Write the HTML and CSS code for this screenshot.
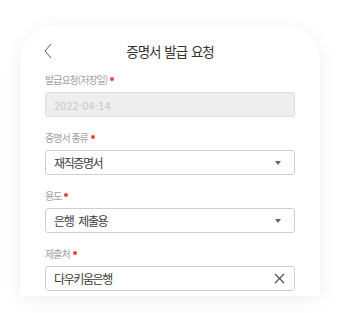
FILE: index.html
```html
<!DOCTYPE html>
<html lang="ko">
<head>
<meta charset="utf-8">
<link rel="stylesheet" href="styles.css">
</head>
<body>
<div class="page">
  <div class="card">
    <div class="header">
      <svg class="back" width="10" height="16" viewBox="0 0 10 16"><path d="M8 1 L2 8 L8 15" fill="none" stroke="#555" stroke-width="1"/></svg>
      <div class="title">증명서 발급 요청</div>
    </div>
    <div class="field">
      <div class="label">발급요청(저장일) <span class="req"></span></div>
      <div class="input disabled">2022-04-14</div>
    </div>
    <div class="field">
      <div class="label">증명서 종류 <span class="req"></span></div>
      <div class="input"><span>재직증명서</span><span class="caret"></span></div>
    </div>
    <div class="field">
      <div class="label">용도 <span class="req"></span></div>
      <div class="input"><span>은행 제출용</span><span class="caret"></span></div>
    </div>
    <div class="field last">
      <div class="label">제출처 <span class="req"></span></div>
      <div class="input"><span>다우키움은행</span>
        <svg class="clear" width="11" height="11" viewBox="0 0 11 11"><path d="M1 1 L10 10 M10 1 L1 10" stroke="#555" stroke-width="1.3" fill="none"/></svg>
      </div>
    </div>
  </div>
</div>
</body>
</html>
```
FILE: styles.css
```css
* { box-sizing: border-box; }
html, body { margin: 0; padding: 0; background: #fff; }
body {
  font-family: "Noto Sans CJK KR", "Noto Sans", sans-serif;
  width: 340px;
  height: 313px;
  overflow: hidden;
}
.page {
  padding: 25px 20px 0;
}
.card {
  background: #fff;
  border-radius: 36px 36px 0 0;
  box-shadow: 0 3px 18px rgba(0,0,0,0.07);
  padding: 0 25px 5px;
}
.header {
  position: relative;
  height: 49px;
  display: flex;
  align-items: center;
  justify-content: center;
  padding-top: 2px;
}
.back {
  position: absolute;
  left: -2px;
  top: 18px;
}
.title {
  font-size: 13.5px;
  color: #333;
  letter-spacing: -1px;
  word-spacing: 1px;
}
.field { margin-bottom: 15px; }
.field.last { margin-bottom: 0; }
.label {
  font-size: 10px;
  line-height: 12px;
  color: #a0a0a0;
  letter-spacing: -1px;
  margin-bottom: 6px;
  display: flex;
  align-items: center;
  gap: 3px;
}
.req {
  width: 4px;
  height: 4px;
  border-radius: 50%;
  background: #e0463c;
  margin-top: -2px;
}
.input {
  height: 25px;
  border: 1px solid #cfcfcf;
  border-radius: 3px;
  display: flex;
  align-items: center;
  justify-content: space-between;
  padding: 0 9px 0 8px;
  font-size: 12px;
  color: #3a3a3a;
  letter-spacing: -1.4px;
  word-spacing: 3px;
}
.input.disabled {
  background: #eeeeee;
  border-color: #dcdcdc;
  color: #c8c8c8;
  font-size: 11px;
  letter-spacing: 0;
  padding-left: 8px;
}
.caret {
  width: 0;
  height: 0;
  border-left: 3.5px solid transparent;
  border-right: 3.5px solid transparent;
  border-top: 4px solid #666;
  margin-right: 4px;
}
.clear { margin-right: 0; }
```
